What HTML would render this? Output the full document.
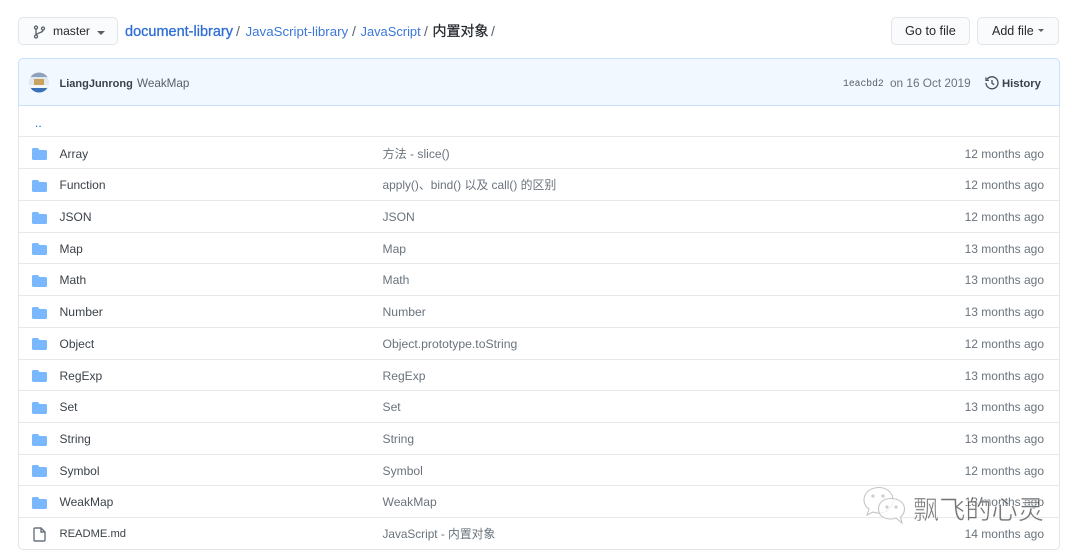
<!DOCTYPE html>
<html><head><meta charset="utf-8">
<style>
html,body{margin:0;padding:0;background:#fff}
body{width:1080px;height:556px;position:relative;overflow:hidden;font-family:"Liberation Sans","Noto Sans CJK SC",sans-serif;font-size:12px;color:#586069}
#w{position:absolute;left:0;top:0;width:1080px;height:556px;filter:blur(.35px)}
.a{position:absolute;white-space:nowrap;line-height:16px}
.btn{position:absolute;box-sizing:border-box;border:1px solid #e1e4e8;border-radius:5px;background:#fafbfc;height:28px;top:17px}
.line{position:absolute;left:19px;width:1040px;height:1px;background:#e6e8eb}
.n{left:59.5px;color:#3b4249}
.m{left:382.5px;color:#6a737d;font-size:12.1px}
.t{right:36px;color:#6a737d}
</style></head><body><div id="w">
<div class="btn" style="left:18px;width:100px"></div>
<svg class="a" style="left:33px;top:25px" width="13" height="14" viewBox="0 0 13 14" fill="none" stroke="#586069" stroke-width="1.3"><circle cx="3" cy="2.5" r="1.5"/><circle cx="3" cy="11.5" r="1.5"/><circle cx="10" cy="3.5" r="1.5"/><path d="M3 4v6M10 5c0 3-5 2-7 5"/></svg>
<div class="a" style="left:53px;top:23px;color:#24292e;font-size:12.1px">master</div>
<div class="a" style="left:97px;top:31px;width:0;height:0;border:4px solid transparent;border-top-color:#586069;border-bottom:0"></div>
<div class="a" style="left:125px;top:23.500px;font-size:14.5px;color:#2f6fd6;-webkit-text-stroke:.3px #2f6fd6">document-library</div>
<div class="a" style="left:236px;top:23px;font-size:14px;color:#586069">/</div>
<div class="a" style="left:245.5px;top:23.500px;font-size:13.3px;color:#3b78d8">JavaScript-library</div>
<div class="a" style="left:352px;top:23px;font-size:14px;color:#586069">/</div>
<div class="a" style="left:360.5px;top:23.500px;font-size:12.9px;color:#3b78d8">JavaScript</div>
<div class="a" style="left:424px;top:23px;font-size:14px;color:#586069">/</div>
<div class="a" style="left:432.5px;top:23px;font-size:14px;color:#24292e;-webkit-text-stroke:.25px #24292e">内置对象</div>
<div class="a" style="left:491px;top:23px;font-size:14px;color:#586069">/</div>
<div class="btn" style="left:891px;width:79px"></div>
<div class="a" style="left:905px;top:23px;color:#24292e;font-size:12.7px">Go to file</div>
<div class="btn" style="left:977px;width:82px"></div>
<div class="a" style="left:992px;top:23px;color:#24292e;font-size:12.5px">Add file</div>
<div class="a" style="left:1038px;top:29px;width:0;height:0;border:3.5px solid transparent;border-top-color:#586069;border-bottom:0"></div>

<div class="a" style="left:18px;top:58px;width:1042px;height:492px;box-sizing:border-box;border:1px solid #e1e4e8;border-radius:5px"></div>
<div class="a" style="left:18px;top:58px;width:1042px;height:48px;box-sizing:border-box;background:#f1f8ff;border:1px solid #c8e1ff;border-radius:5px 5px 0 0"></div>
<svg class="a" style="left:29px;top:72px" width="20" height="21" viewBox="0 0 20 21"><defs><clipPath id="c"><circle cx="10" cy="10.500" r="10"/></clipPath></defs><g clip-path="url(#c)"><rect width="20" height="21" fill="#dfe8ee"/><rect width="20" height="5" fill="#8ea3bb"/><rect y="15" width="20" height="6" fill="#3a70b5"/><rect x="5" y="7" width="10" height="6" fill="#c9a35d"/><rect x="0" y="13" width="20" height="3" fill="#f3f6f8"/></g></svg>
<div class="a" style="left:59.5px;top:75.500px;color:#3b4249;font-weight:700;font-size:11px">LiangJunrong</div>
<div class="a" style="left:137px;top:75.500px;color:#586069;font-size:11.7px">WeakMap</div>
<div class="a" style="left:843px;top:76px;font-family:'Liberation Mono',monospace;font-size:9.7px;color:#586069">1eacbd2</div>
<div class="a" style="left:890px;top:75px;color:#6a737d;font-size:11.8px">on 16 Oct 2019</div>
<svg class="a" style="left:985px;top:76px" width="14" height="14" viewBox="0 0 14 14" fill="none" stroke="#444d56" stroke-width="1.3"><path d="M2.200 3.200A6 6 0 1 1 1 7"/><path d="M1 1.500V4.300H3.800"/><path d="M7 4v3.300l2.200 1.400"/></svg>
<div class="a" style="left:1002px;top:75.500px;color:#3b4249;font-weight:700;font-size:11.3px">History</div>

<div class="a" style="left:35px;top:115px;color:#0366d6">..</div>
<div class="line" style="top:136px"></div><div class="line" style="top:168px"></div><div class="line" style="top:200px"></div><div class="line" style="top:232px"></div><div class="line" style="top:263px"></div><div class="line" style="top:295px"></div><div class="line" style="top:327px"></div><div class="line" style="top:359px"></div><div class="line" style="top:390px"></div><div class="line" style="top:422px"></div><div class="line" style="top:454px"></div><div class="line" style="top:485px"></div><div class="line" style="top:517px"></div>

<svg width="0" height="0" style="position:absolute"><defs><path id="f" d="M1.500 0H6l1.500 2H13.500A1.500 1.500 0 0 1 15 3.500V10.500A1.500 1.500 0 0 1 13.500 12H1.500A1.500 1.500 0 0 1 0 10.500V1.500A1.500 1.500 0 0 1 1.500 0Z" fill="#79b8ff"/></defs></svg>
<svg class="a" style="left:32px;top:148px" width="15" height="12"><use href="#f"/></svg><div class="a n" style="top:146px">Array</div><div class="a m" style="top:146px">方法 - slice()</div><div class="a t" style="top:146px">12 months ago</div>
<svg class="a" style="left:32px;top:180px" width="15" height="12"><use href="#f"/></svg><div class="a n" style="top:177px">Function</div><div class="a m" style="top:177px;font-size:11.9px">apply()、bind() 以及 call() 的区别</div><div class="a t" style="top:177px">12 months ago</div>
<svg class="a" style="left:32px;top:212px" width="15" height="12"><use href="#f"/></svg><div class="a n" style="top:209px">JSON</div><div class="a m" style="top:209px">JSON</div><div class="a t" style="top:209px">12 months ago</div>
<svg class="a" style="left:32px;top:243px" width="15" height="12"><use href="#f"/></svg><div class="a n" style="top:241px">Map</div><div class="a m" style="top:241px">Map</div><div class="a t" style="top:241px">13 months ago</div>
<svg class="a" style="left:32px;top:275px" width="15" height="12"><use href="#f"/></svg><div class="a n" style="top:272px">Math</div><div class="a m" style="top:272px">Math</div><div class="a t" style="top:272px">13 months ago</div>
<svg class="a" style="left:32px;top:307px" width="15" height="12"><use href="#f"/></svg><div class="a n" style="top:304px;font-size:12.2px">Number</div><div class="a m" style="top:304px;font-size:12.2px">Number</div><div class="a t" style="top:304px">13 months ago</div>
<svg class="a" style="left:32px;top:338px" width="15" height="12"><use href="#f"/></svg><div class="a n" style="top:336px">Object</div><div class="a m" style="top:336px;font-size:12.2px">Object.prototype.toString</div><div class="a t" style="top:336px">12 months ago</div>
<svg class="a" style="left:32px;top:370px" width="15" height="12"><use href="#f"/></svg><div class="a n" style="top:368px">RegExp</div><div class="a m" style="top:368px">RegExp</div><div class="a t" style="top:368px">13 months ago</div>
<svg class="a" style="left:32px;top:402px" width="15" height="12"><use href="#f"/></svg><div class="a n" style="top:399px">Set</div><div class="a m" style="top:399px">Set</div><div class="a t" style="top:399px">13 months ago</div>
<svg class="a" style="left:32px;top:434px" width="15" height="12"><use href="#f"/></svg><div class="a n" style="top:431px">String</div><div class="a m" style="top:431px">String</div><div class="a t" style="top:431px">13 months ago</div>
<svg class="a" style="left:32px;top:465px" width="15" height="12"><use href="#f"/></svg><div class="a n" style="top:463px">Symbol</div><div class="a m" style="top:463px">Symbol</div><div class="a t" style="top:463px">12 months ago</div>
<svg class="a" style="left:32px;top:497px" width="15" height="12"><use href="#f"/></svg><div class="a n" style="top:494px">WeakMap</div><div class="a m" style="top:494px">WeakMap</div><div class="a t" style="top:494px">13 months ago</div>
<svg class="a" style="left:33px;top:527px" width="13" height="15" viewBox="0 0 13 15" fill="none" stroke="#6a737d" stroke-width="1.4"><path d="M1 2A1 1 0 0 1 2 1H8L12 5V13A1 1 0 0 1 11 14H2A1 1 0 0 1 1 13Z"/><path d="M8 1V5H12"/></svg><div class="a n" style="top:526px;font-size:11.2px">README.md</div><div class="a m" style="top:526px;font-size:11.8px">JavaScript - 内置对象</div><div class="a t" style="top:526px">14 months ago</div>

<svg class="a" style="left:862px;top:486px" width="44" height="39" viewBox="0 0 44 39" fill="#fff" fill-opacity=".75" stroke="#c4c4c4" stroke-width="1.1"><path d="M17 1.500C8 1.500 2 7 2 14C2 18 4 21 7 23L5 29L11 26C13 27 15 27 17 27C26 27 31 20 31 14C31 7 25 1.500 17 1.500Z"/><path d="M29 12.500C21 12.500 16.500 17 16.500 23C16.500 29 21 33 29 33C31 33 32 33 34 32L40 37L38.500 31C41 29 42.500 26 42.500 23C42.500 17 37 12.500 29 12.500Z"/><circle cx="11" cy="10" r="1"/><circle cx="21" cy="10" r="1"/><circle cx="25" cy="21" r="1"/><circle cx="34" cy="21" r="1"/></svg>
<div class="a" style="left:913px;top:491px;font-size:26.200px;line-height:34px;color:rgba(70,70,70,.75);font-family:'Noto Sans CJK SC',sans-serif;font-weight:400;-webkit-text-stroke:.6px rgba(255,255,255,.8)">飘飞的心灵</div>
</div></body></html>
